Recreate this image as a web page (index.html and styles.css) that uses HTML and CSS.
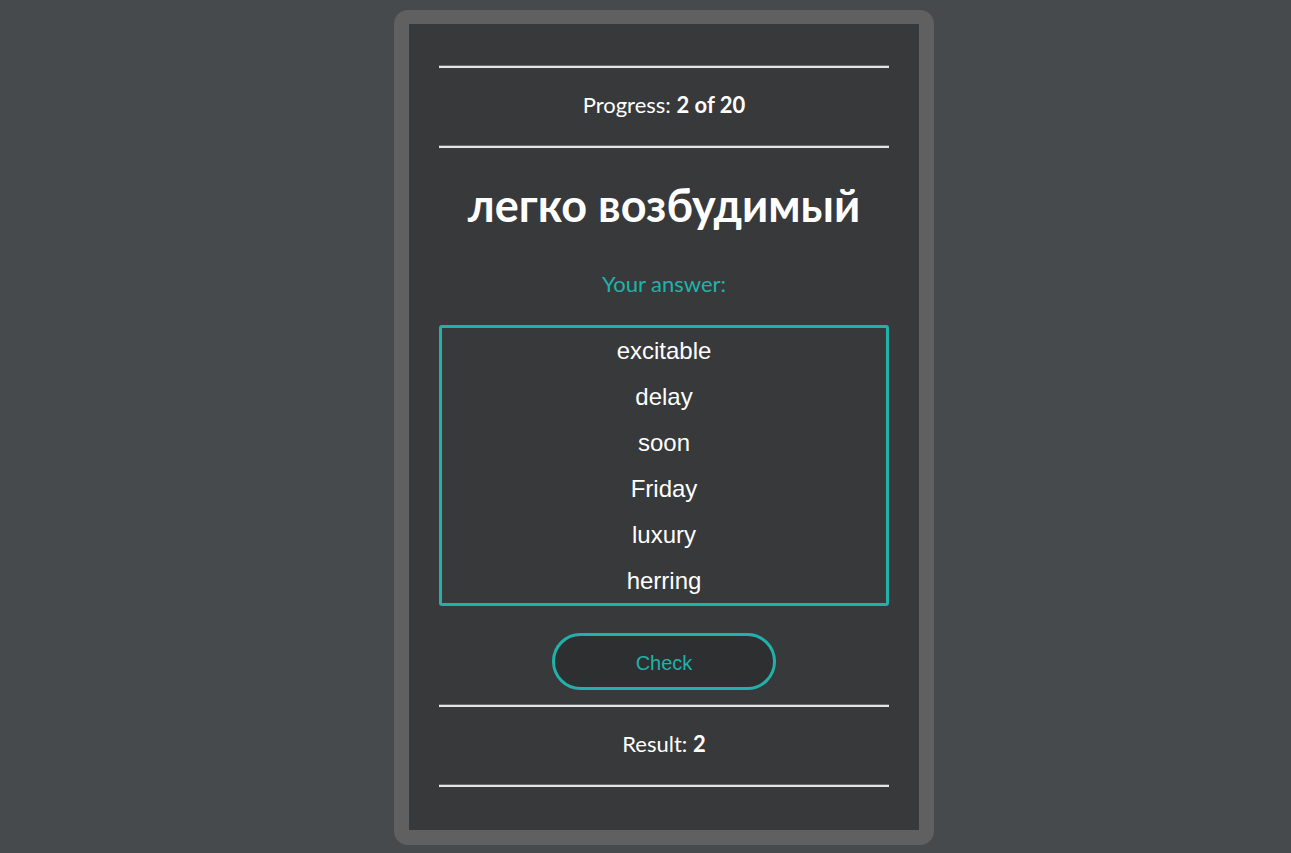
FILE: index.html
```html
<!DOCTYPE html>
<html lang="en">
<head>
<meta charset="utf-8">
<title>Quiz</title>
<link rel="stylesheet" href="styles.css">
</head>
<body>
<div class="card">
  <div class="inner">
    <div class="rule"></div>
    <p class="stat">Progress: <b>2 of 20</b></p>
    <div class="rule"></div>
    <h1 class="word">легко возбудимый</h1>
    <p class="prompt">Your answer:</p>
    <div class="options">
      <div class="option">excitable</div>
      <div class="option">delay</div>
      <div class="option">soon</div>
      <div class="option">Friday</div>
      <div class="option">luxury</div>
      <div class="option">herring</div>
    </div>
    <div class="actions"><button class="check">Check</button></div>
    <div class="rule rule-gap"></div>
    <p class="stat">Result: <b>2</b></p>
    <div class="rule"></div>
  </div>
</div>
</body>
</html>
```
FILE: styles.css
```css
html, body {
  margin: 0;
  padding: 0;
  background: #464a4d;
  height: 100%;
}
body {
  font-family: "Lato", "Open Sans", "DejaVu Sans", sans-serif;
  color: #ffffff;
  padding-top: 10px;
  box-sizing: border-box;
}
.card {
  width: 510px;
  margin-left: 394px;
  border: 15px solid #606060;
  border-top-width: 14px;
  border-radius: 14px;
  background: #38393b;
}
.inner {
  padding: 42px 30px 43px;
}
.rule {
  height: 2px;
  background: #e4e4e4;
  box-shadow: 0 -1px 0 rgba(200, 200, 200, 0.35);
}
.stat {
  margin: 25px 0 29px;
  font-size: 22px;
  line-height: 24px;
  text-align: center;
}
.word {
  margin: 33px 0 0;
  font-size: 45px;
  line-height: 48px;
  font-weight: 700;
  text-align: center;
}
.prompt {
  margin: 43px 0 0;
  font-size: 22px;
  line-height: 24px;
  color: #20b2aa;
  text-align: center;
}
.options {
  margin-top: 29px;
  height: 281px;
  box-sizing: border-box;
  border: 3px solid #20b2aa;
  border-radius: 3px;
  overflow: hidden;
  font-family: "Liberation Sans", Arial, sans-serif;
}
.option {
  height: 46px;
  line-height: 46px;
  font-size: 24px;
  text-align: center;
}
.actions {
  margin-top: 27px;
  display: flex;
  justify-content: center;
}
.check {
  width: 224px;
  height: 57px;
  border: 3px solid #20b2aa;
  border-radius: 30px;
  background: #2e2f31;
  color: #20b2aa;
  font-family: "Liberation Sans", Arial, sans-serif;
  font-size: 20px;
  line-height: 22px;
  padding: 2px 0 0;
}
.rule-gap {
  margin-top: 15px;
}
```
